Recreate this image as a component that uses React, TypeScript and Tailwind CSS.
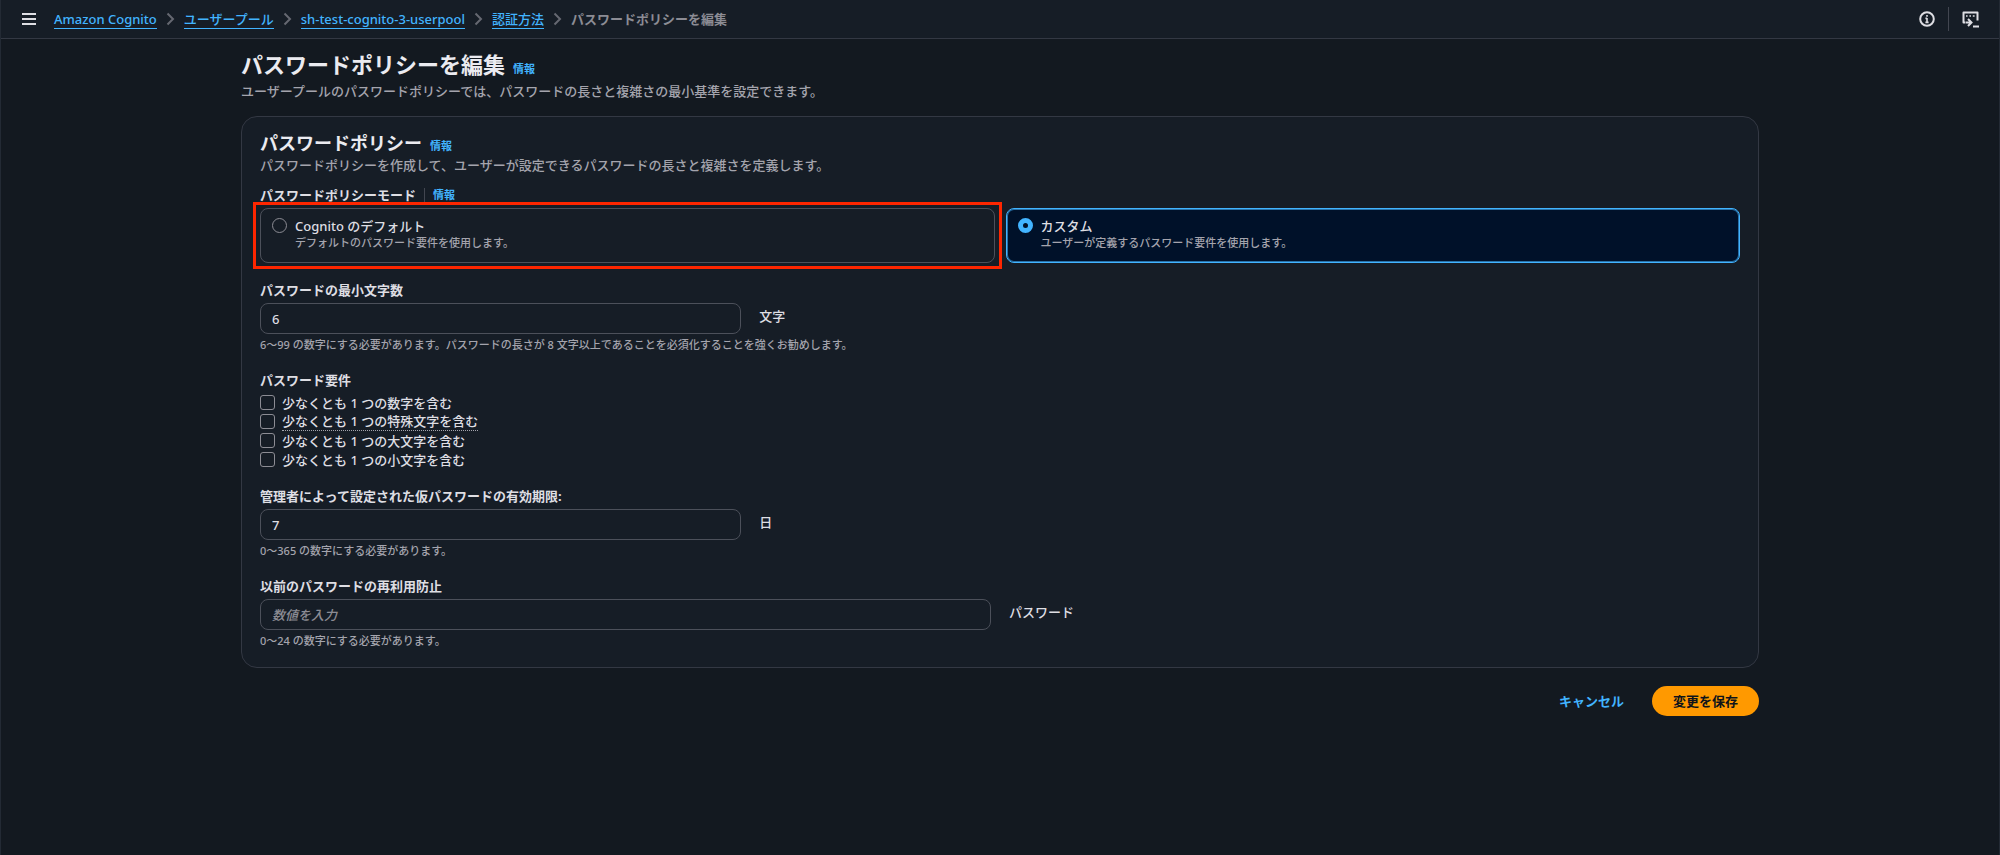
import { useState } from 'react';
import type { ReactNode } from 'react';

interface Crumb {
  label: string;
  href: string;
}

const crumbs: Crumb[] = [
  { label: 'Amazon Cognito', href: '#cognito' },
  { label: 'ユーザープール', href: '#user-pools' },
  { label: 'sh-test-cognito-3-userpool', href: '#user-pool' },
  { label: '認証方法', href: '#authentication' },
];

const modes = [
  {
    id: 'default',
    title: 'Cognito のデフォルト',
    description: 'デフォルトのパスワード要件を使用します。',
  },
  {
    id: 'custom',
    title: 'カスタム',
    description: 'ユーザーが定義するパスワード要件を使用します。',
  },
];

const requirements = [
  { id: 'numbers', label: '少なくとも 1 つの数字を含む', hint: false },
  { id: 'symbols', label: '少なくとも 1 つの特殊文字を含む', hint: true },
  { id: 'uppercase', label: '少なくとも 1 つの大文字を含む', hint: false },
  { id: 'lowercase', label: '少なくとも 1 つの小文字を含む', hint: false },
];

function InfoLink() {
  return (
    <a href="#info" className="text-[11px] font-bold text-[#42b4ff]">
      情報
    </a>
  );
}

function ChevronIcon() {
  return (
    <svg className="mx-[9px] h-[14px] w-[9px] shrink-0 text-[#656871]" viewBox="0 0 9 14" fill="none" stroke="currentColor" strokeWidth="2">
      <path d="M1.5 1.5 7 7l-5.5 5.5" />
    </svg>
  );
}

interface FieldProps {
  id: string;
  label: string;
  unit: string;
  help: string;
  value: string;
  placeholder?: string;
  wide?: boolean;
  onChange: (value: string) => void;
}

function Field({ id, label, unit, help, value, placeholder, wide, onChange }: FieldProps) {
  return (
    <div>
      <label htmlFor={id} className="block font-bold">
        {label}
      </label>
      <div className={`mt-1 grid items-center gap-[18px] ${wide ? 'grid-cols-2' : 'grid-cols-3'}`}>
        <input
          id={id}
          type="text"
          inputMode="numeric"
          value={value}
          placeholder={placeholder}
          onChange={(e) => onChange(e.target.value)}
          className="h-[31px] w-full rounded-lg border border-[#4c505a] bg-[#161d26] px-[11px] font-medium outline-none placeholder:text-[#8c8c94] placeholder:italic"
        />
        <span className="pb-[6px]">{unit}</span>
      </div>
      <p className="mt-[3px] text-[11px] leading-4 text-[#a4a4ad]">{help}</p>
    </div>
  );
}

function Header({ children }: { children: ReactNode }) {
  return (
    <header className="flex h-[39px] items-center border-b border-[#333843] bg-[#161d26] px-5">
      <button type="button" aria-label="メニュー" className="mr-[18px] ml-px text-[#dedee3]">
        <svg className="h-[14px] w-[14px]" viewBox="0 0 14 14" fill="none" stroke="currentColor" strokeWidth="2">
          <path d="M0 2h14M0 7h14M0 12h14" />
        </svg>
      </button>
      {children}
      <div className="ml-auto flex items-center text-[#dedee3]">
        <button type="button" aria-label="情報">
          <svg className="h-4 w-4" viewBox="0 0 16 16" fill="none" stroke="currentColor" strokeWidth="2">
            <circle cx="8" cy="8" r="6.8" />
            <path d="M8 7v4.4M6.4 11.4h3.2M6.4 7.4H8M8 4v1.8" strokeWidth="1.6" />
          </svg>
        </button>
        <span className="mx-[13px] h-6 w-px bg-[#424650]" />
        <button type="button" aria-label="CloudShell">
          <svg className="h-[17px] w-[17px]" viewBox="0 0 17 17" fill="none" stroke="currentColor" strokeWidth="2">
            <path d="M3 11.5H1.5v-10h14v8" strokeLinejoin="round" />
            <path d="M4 5h1.6M7.4 5H9M10.8 5h1.8" strokeWidth="1.6" />
            <path d="M3.5 11.5h5M6 8l3.5 3.5L6 15M11 15.5h6" strokeWidth="2" />
          </svg>
        </button>
      </div>
    </header>
  );
}

export default function App() {
  const [mode, setMode] = useState('custom');
  const [minLength, setMinLength] = useState('6');
  const [expiry, setExpiry] = useState('7');
  const [history, setHistory] = useState('');
  const [checked, setChecked] = useState<string[]>([]);

  const toggle = (id: string) => {
    setChecked((prev) => (prev.includes(id) ? prev.filter((item) => item !== id) : [...prev, id]));
  };

  return (
    <div className="min-h-screen border-x border-[#232a34] bg-[#131920] font-['Noto_Sans','Noto_Sans_CJK_JP',sans-serif] text-[13px] leading-[18px] font-medium text-[#dedee3]">
      <Header>
        <nav aria-label="breadcrumb">
          <ol className="flex items-center">
            {crumbs.map((crumb) => (
              <li key={crumb.label} className="flex items-center">
                <a href={crumb.href} className="border-b border-[#42b4ff] text-[#42b4ff]">
                  {crumb.label}
                </a>
                <ChevronIcon />
              </li>
            ))}
            <li className="font-bold text-[#8c8c94]">パスワードポリシーを編集</li>
          </ol>
        </nav>
      </Header>

      <main className="mx-auto max-w-[1518px] pt-[11px]">
        <div className="flex items-baseline gap-2">
          <h1 className="text-[22px] leading-7 font-bold text-[#ebebf0]">パスワードポリシーを編集</h1>
          <InfoLink />
        </div>
        <p className="mt-1 text-[#a4a4ad]">
          ユーザープールのパスワードポリシーでは、パスワードの長さと複雑さの最小基準を設定できます。
        </p>

        <form onSubmit={(e) => e.preventDefault()}>
          <section className="mt-4 rounded-2xl border border-[#333843] bg-[#161d26] px-[18px] pt-[14px] pb-[18px]">
            <div className="flex items-baseline gap-2">
              <h2 className="text-[18px] leading-6 font-bold text-[#ebebf0]">パスワードポリシー</h2>
              <InfoLink />
            </div>
            <p className="mt-px text-[#a4a4ad]">
              パスワードポリシーを作成して、ユーザーが設定できるパスワードの長さと複雑さを定義します。
            </p>

            <div className="mt-3 flex flex-col gap-[18px]">
              <div role="radiogroup" aria-labelledby="mode-label">
                <div className="flex items-center">
                  <span id="mode-label" className="font-bold">
                    パスワードポリシーモード
                  </span>
                  <span className="mx-2 h-[14px] w-px bg-[#424650]" />
                  <InfoLink />
                </div>
                <div className="mt-1 grid grid-cols-2 gap-[11px]">
                  {modes.map((item) => (
                    <div key={item.id} className="relative">
                      <label
                        className={`flex gap-2 rounded-lg border px-[11px] pt-2 pb-[11px] ${
                          mode === item.id
                            ? 'border-[#42b4ff] bg-[#001129] ring-1 ring-[#42b4ff]/60 ring-inset'
                            : 'border-[#4c505a]'
                        }`}
                      >
                        <input
                          type="radio"
                          name="mode"
                          value={item.id}
                          checked={mode === item.id}
                          onChange={() => setMode(item.id)}
                          className="mt-px h-[15px] w-[15px] shrink-0 appearance-none rounded-full border border-[#8c8c94] checked:border-[5px] checked:border-[#42b4ff]"
                        />
                        <span>
                          <span className="block">{item.title}</span>
                          <span className="block text-[11px] leading-4 text-[#a4a4ad]">{item.description}</span>
                        </span>
                      </label>
                      {item.id === 'default' && (
                        <span className="pointer-events-none absolute -inset-x-[7px] -inset-y-[6px] border-[3px] border-[#fe2600]" />
                      )}
                    </div>
                  ))}
                </div>
              </div>

              <Field
                id="min-length"
                label="パスワードの最小文字数"
                unit="文字"
                help="6～99 の数字にする必要があります。パスワードの長さが 8 文字以上であることを必須化することを強くお勧めします。"
                value={minLength}
                onChange={setMinLength}
              />

              <fieldset>
                <legend className="font-bold">パスワード要件</legend>
                <div className="mt-1 flex flex-col items-start">
                  {requirements.map((item) => (
                    <label key={item.id} className="flex h-[19px] items-center gap-[7px]">
                      <input
                        type="checkbox"
                        checked={checked.includes(item.id)}
                        onChange={() => toggle(item.id)}
                        className="h-[15px] w-[15px] shrink-0 appearance-none rounded-[3px] border border-[#8c8c94] checked:border-[#42b4ff] checked:bg-[#42b4ff]"
                      />
                      <span className={item.hint ? 'border-b border-dotted border-[#a4a4ad]' : ''}>{item.label}</span>
                    </label>
                  ))}
                </div>
              </fieldset>

              <Field
                id="expiry"
                label="管理者によって設定された仮パスワードの有効期限:"
                unit="日"
                help="0～365 の数字にする必要があります。"
                value={expiry}
                onChange={setExpiry}
              />

              <Field
                id="history"
                label="以前のパスワードの再利用防止"
                unit="パスワード"
                help="0～24 の数字にする必要があります。"
                value={history}
                placeholder="数値を入力"
                wide
                onChange={setHistory}
              />
            </div>
          </section>

          <div className="mt-[18px] flex justify-end gap-2">
            <button type="button" className="h-[30px] rounded-full px-5 font-bold text-[#42b4ff]">
              キャンセル
            </button>
            <button type="submit" className="h-[30px] rounded-full bg-[#ff9900] px-[21px] font-bold text-[#0f141a]">
              変更を保存
            </button>
          </div>
        </form>
      </main>
    </div>
  );
}
